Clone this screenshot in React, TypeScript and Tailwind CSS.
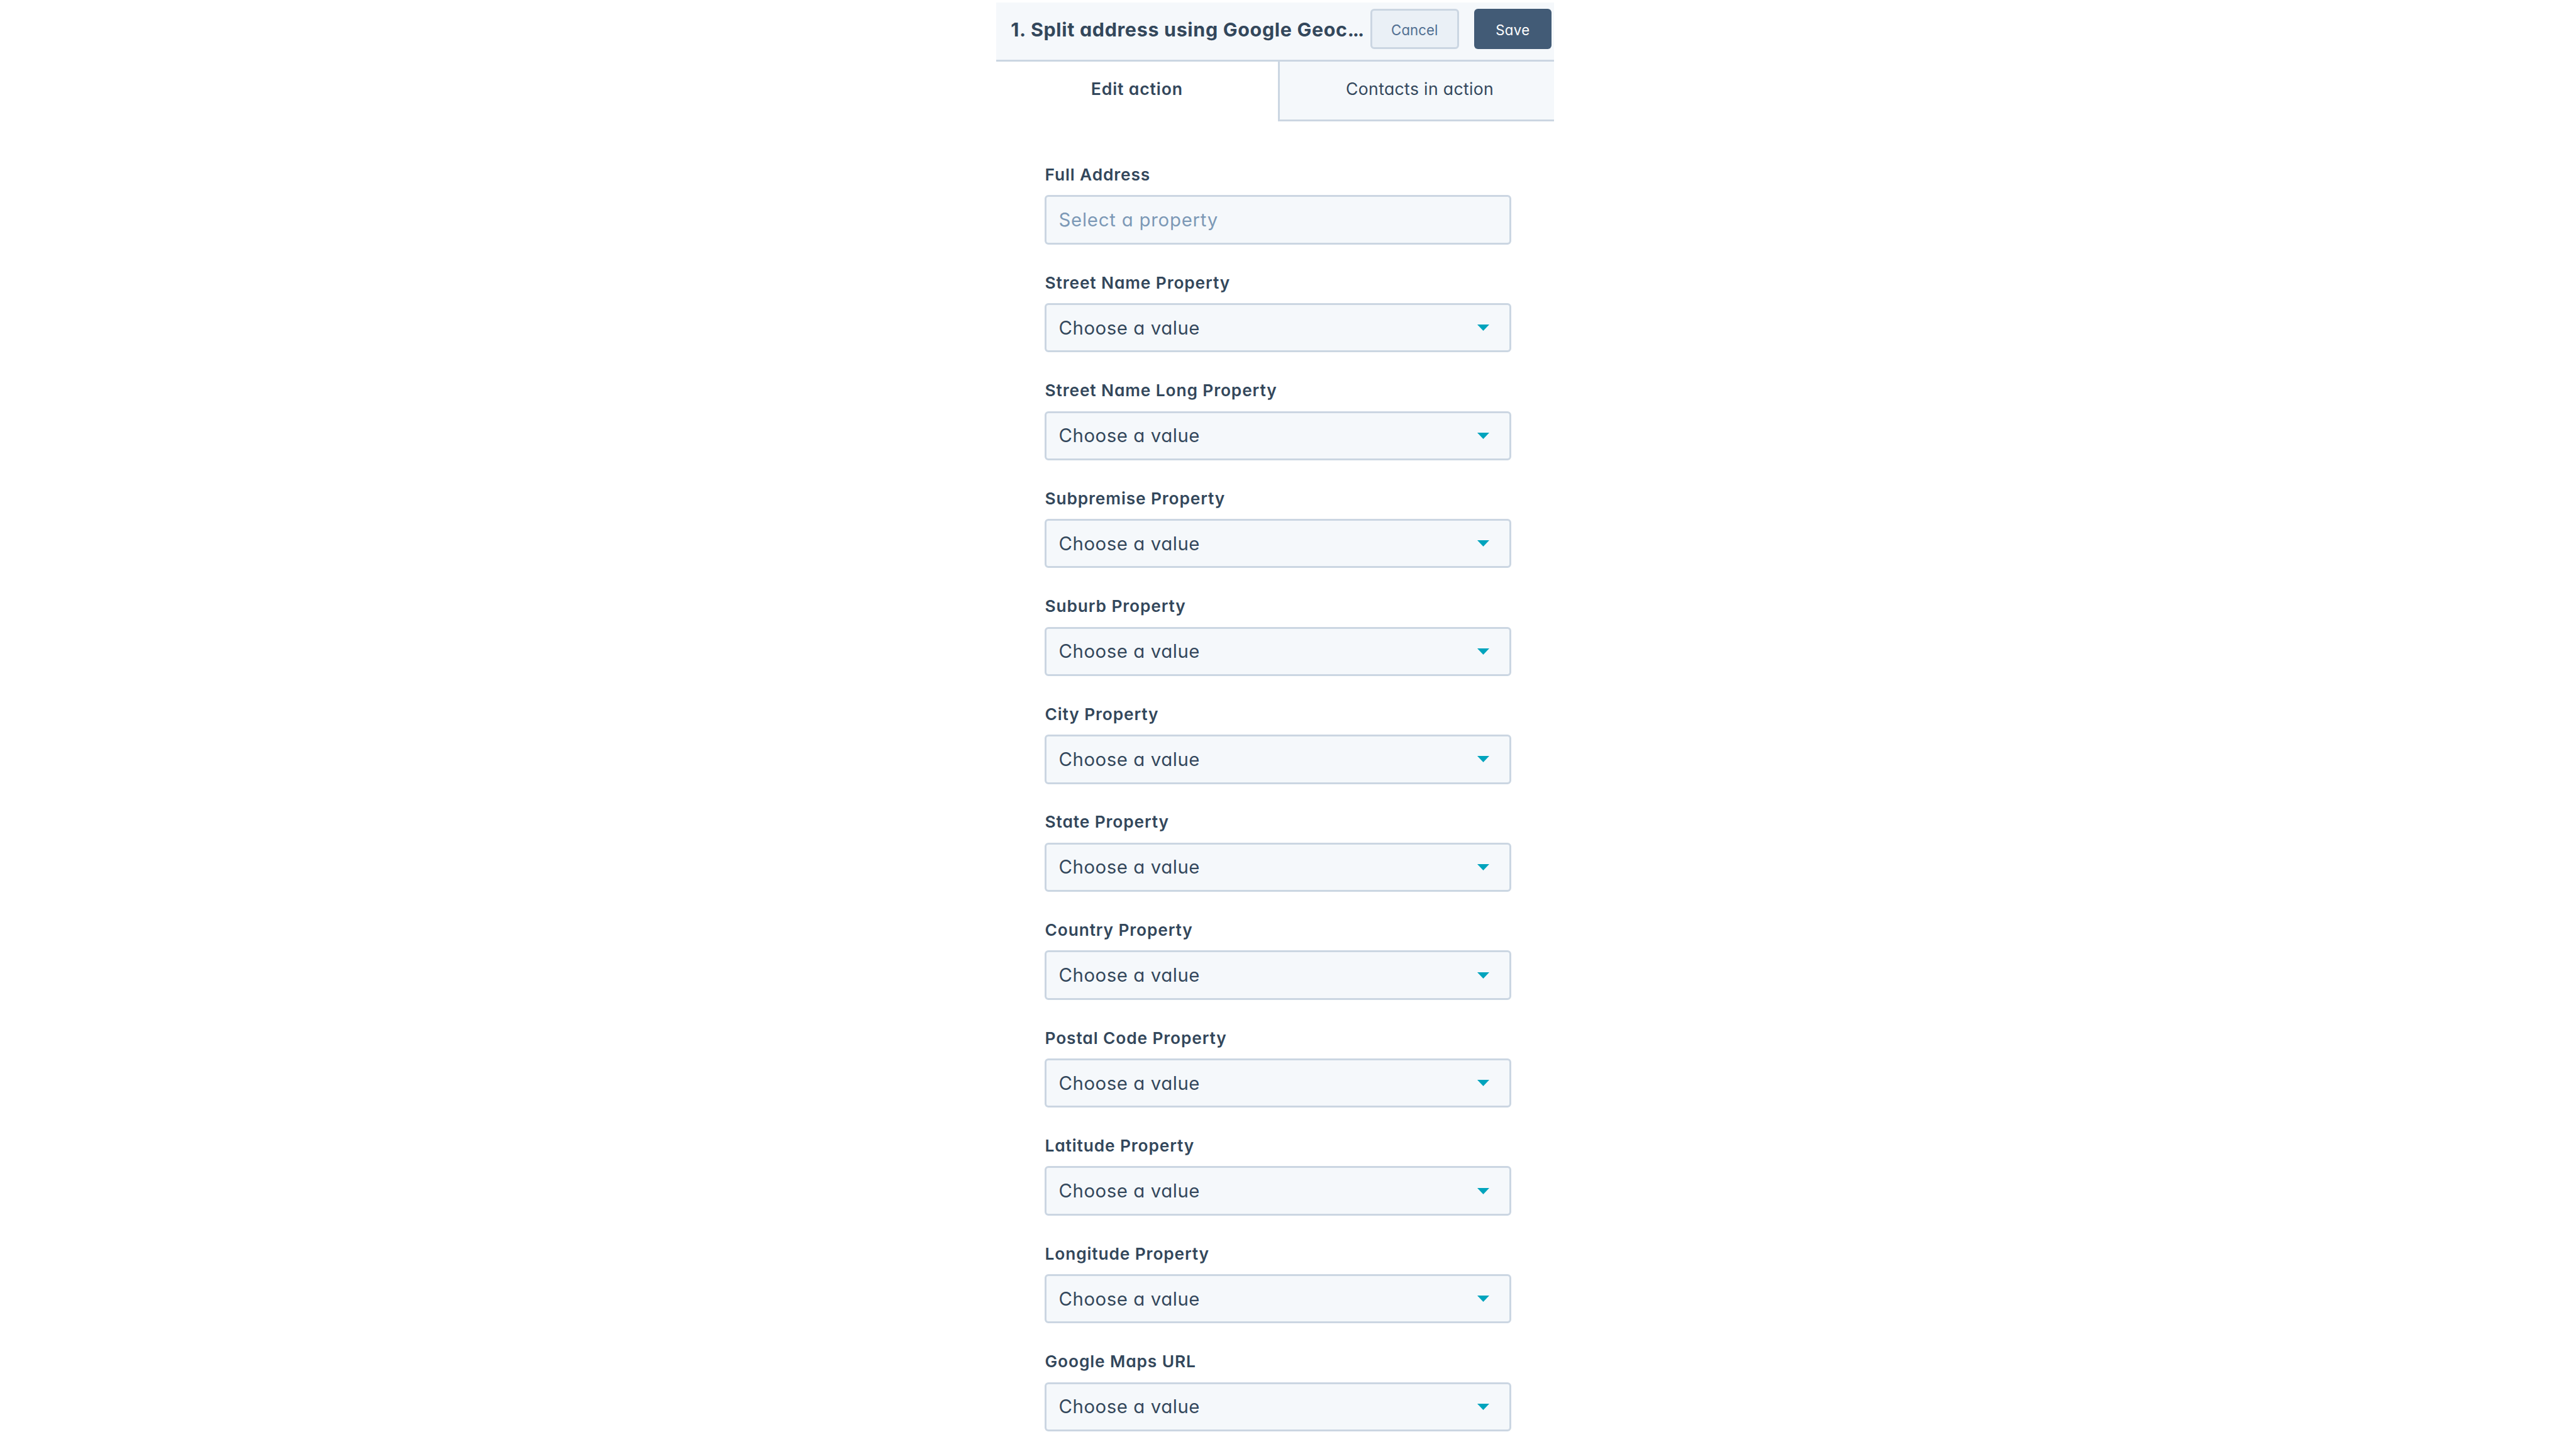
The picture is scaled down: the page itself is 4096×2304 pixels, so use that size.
import React from "react";

interface FieldProps {
  label: string;
  placeholder?: string;
}

const fields: FieldProps[] = [
  { label: "Full Address", placeholder: "Select a property" },
  { label: "Street Name Property" },
  { label: "Street Name Long Property" },
  { label: "Subpremise Property" },
  { label: "Suburb Property" },
  { label: "City Property" },
  { label: "State Property" },
  { label: "Country Property" },
  { label: "Postal Code Property" },
  { label: "Latitude Property" },
  { label: "Longitude Property" },
  { label: "Google Maps URL" },
];

function Caret() {
  return (
    <svg viewBox="0 0 19 10" className="h-[10px] w-[19px] fill-[#00a4bd]">
      <path d="M0 0h19L9.5 10z" />
    </svg>
  );
}

function Field({ label, placeholder }: FieldProps) {
  return (
    <div className="flex flex-col gap-[16.3px]">
      <label className="text-[26.3px] leading-8 font-semibold tracking-[0.9px]">{label}</label>
      <div className="flex h-[78.4px] items-center justify-between rounded-[6px] border-3 border-[#cbd6e2] bg-[#f5f8fb] pr-[32px] pl-[19px] text-[29.3px] leading-9 font-normal">
        {placeholder ? (
          <span className="pt-px tracking-[0.8px] text-[#7c98b6]">{placeholder}</span>
        ) : (
          <>
            <span className="pt-px tracking-[0.6px]">Choose a value</span>
            <Caret />
          </>
        )}
      </div>
    </div>
  );
}

export default function App() {
  return (
    <div className="flex h-[2304px] w-[4096px] overflow-hidden bg-white pl-[1583.8px] font-['Inter',sans-serif] text-[#33475b] [font-feature-settings:'cv11'_1]">
      <main className="w-[887.6px] shrink-0 pt-[4px]">
        {/* Header */}
        <header className="flex h-[93.5px] items-start border-b-3 border-[#cbd6e2] bg-[#f5f8fb] pr-[4.9px] pl-[23.5px]">
          <h1 className="mt-[25.3px] flex-1 text-[30.4px] leading-9 font-bold tracking-[0.7px] whitespace-nowrap">
            1. Split address using Google Geoc<span className="tracking-[-2px]">...</span>
          </h1>
          <div className="flex gap-6 pt-[10px] text-[22.2px] leading-7 font-normal">
            <button className="h-16 w-[141.7px] rounded-[6px] border-3 border-[#cbd6e2] bg-[#eaf0f6] pt-[3px] tracking-[0.1px] text-[#506e91]">
              Cancel
            </button>
            <button className="h-16 w-[122.3px] rounded-[6px] bg-[#425b76] pt-[3px] tracking-[0.4px] text-white">
              Save
            </button>
          </div>
        </header>

        {/* Tabs */}
        <nav className="flex h-[95px] text-[26.6px] leading-8">
          <div className="flex w-[448px] items-center justify-center pb-[7.5px] font-semibold tracking-[0.85px]">
            Edit action
          </div>
          <div className="flex flex-1 items-center justify-center border-b-3 border-l-3 border-[#cbd6e2] bg-[#f5f8fb] pb-[5px] pl-[9px] font-normal tracking-[0.35px]">
            Contacts in action
          </div>
        </nav>

        {/* Property fields */}
        <section className="flex flex-col gap-[44.88px] pt-[69.6px] pr-[68.5px] pl-[77.7px]">
          {fields.map((field) => (
            <Field key={field.label} {...field} />
          ))}
        </section>
      </main>
    </div>
  );
}
